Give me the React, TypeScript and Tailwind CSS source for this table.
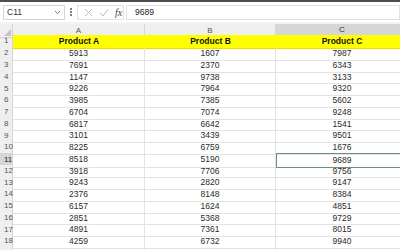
const colA = [5913, 7691, 1147, 9226, 3985, 6704, 6817, 3101, 8225, 8518, 3918, 9243, 2376, 6157, 2851, 4891, 4259];
const colB = [1607, 2370, 9738, 7964, 7385, 7074, 6642, 3439, 6759, 5190, 7706, 2820, 8148, 1624, 5368, 7361, 6732];
const colC = [7987, 6343, 3133, 9320, 5602, 9248, 1541, 9501, 1676, 9689, 9756, 9147, 8384, 4851, 9729, 8015, 9940];

const gridCols = "grid grid-cols-[13px_132px_131px_132px]";

function FormulaBar() {
  return (
    <div className="flex h-[20px] items-center bg-white pl-[3px]">
      <div className="flex h-[15px] w-[62px] items-center justify-between border border-[#d4d4d4] px-[3px]">
        <span className="text-[8.5px] text-[#333]">C11</span>
        <svg width="7" height="5" viewBox="0 0 7 5">
          <path d="M1 1 L3.5 3.5 L6 1" fill="none" stroke="#666" strokeWidth="0.9" />
        </svg>
      </div>
      <div className="ml-[3px] flex w-[6px] flex-col items-center gap-[1.5px]">
        <span className="h-[1.5px] w-[1.5px] rounded-full bg-[#555]" />
        <span className="h-[1.5px] w-[1.5px] rounded-full bg-[#555]" />
        <span className="h-[1.5px] w-[1.5px] rounded-full bg-[#555]" />
      </div>
      <div className="ml-[3px] flex h-[15px] w-[47px] items-center gap-[6px] border border-[#e2e2e2] pl-[6px]">
        <svg width="9" height="9" viewBox="0 0 9 9">
          <path d="M1 1 L8 8 M8 1 L1 8" stroke="#b8b8b8" strokeWidth="0.9" />
        </svg>
        <svg width="10" height="9" viewBox="0 0 10 9">
          <path d="M1 5 L4 8 L9 1" fill="none" stroke="#b8b8b8" strokeWidth="0.9" />
        </svg>
        <span className="font-['Liberation_Serif',serif] text-[10px] italic text-[#444]">fx</span>
      </div>
      <div className="ml-[2px] flex h-[15px] flex-1 items-center border border-[#e2e2e2] pl-[8px]">
        <span className="text-[8.5px] text-[#222]">9689</span>
      </div>
    </div>
  );
}

export default function App() {
  return (
    <div className="h-[250px] w-[400px] overflow-hidden bg-white font-['Liberation_Sans',Arial,sans-serif]">
      <div className="h-[2px] bg-[#4d4d4d]" />
      <FormulaBar />
      <div className="h-[2px] bg-[#f3f3f3]" />
      <div className={`${gridCols} h-[11px] text-[8px] text-[#555]`}>
        <div className="relative border-r border-b border-[#d0d0d0] bg-[#efefef]">
          <svg className="absolute right-[1px] bottom-[1px]" width="7" height="7" viewBox="0 0 7 7">
            <path d="M7 0 L7 7 L0 7 Z" fill="#c4c4c4" />
          </svg>
        </div>
        <div className="flex items-center justify-center border-r border-b border-[#d6d6d6] bg-[#efefef]">A</div>
        <div className="flex items-center justify-center border-r border-b border-[#d6d6d6] bg-[#efefef]">B</div>
        <div className="flex items-center justify-center border-b-2 border-[#9e9e9e] bg-[#d6d6d6] text-[#333]">C</div>
      </div>
      <div className={`${gridCols} h-[12px] text-[8.5px]`}>
        <div className="flex items-center border-r border-b border-[#d6d6d6] bg-[#efefef] pl-[4px] text-[8px] text-[#555]">1</div>
        <div className="flex items-center justify-center border-b border-[#e2e200] bg-[#ffff00] font-bold text-[#111]">Product A</div>
        <div className="flex items-center justify-center border-b border-[#e2e200] bg-[#ffff00] font-bold text-[#111]">Product B</div>
        <div className="flex items-center justify-center border-b border-[#e2e200] bg-[#ffff00] font-bold text-[#111]">Product C</div>
      </div>
      {colA.map((a, i) => {
        const active = i === 9;
        return (
          <div key={i} className={`${gridCols} h-[11.75px] text-[8.5px] text-[#2a2a2a]`}>
            <div
              className={`flex items-center border-r border-b border-[#d6d6d6] pl-[4px] text-[8px] ${
                active ? "bg-[#d6d6d6] text-[#222]" : "bg-[#efefef] text-[#555]"
              }`}
            >
              {i + 2}
            </div>
            <div className="flex items-center justify-center border-r border-b border-[#e3e3e3]">{a}</div>
            <div className="flex items-center justify-center border-r border-b border-[#e3e3e3]">{colB[i]}</div>
            <div
              className={`flex items-center justify-center ${
                active ? "border border-[#6f8f7d]" : "border-b border-[#e3e3e3]"
              }`}
            >
              {colC[i]}
            </div>
          </div>
        );
      })}
      <div className={`${gridCols} h-[11.75px]`}>
        <div className="border-r border-[#d6d6d6] bg-[#efefef]" />
        <div className="border-r border-[#e3e3e3]" />
        <div className="border-r border-[#e3e3e3]" />
        <div />
      </div>
    </div>
  );
}
